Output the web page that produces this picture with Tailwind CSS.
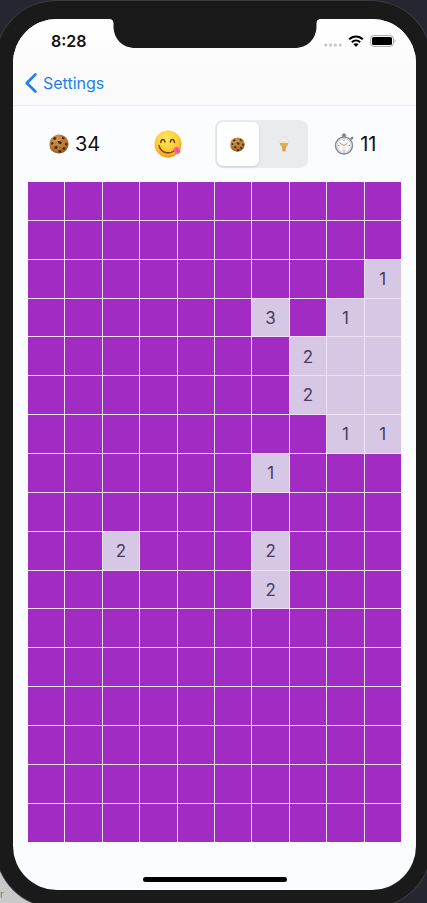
<!DOCTYPE html>
<html lang="en">
<head>
<meta charset="utf-8">
<meta name="viewport" content="width=device-width, initial-scale=1">
<title>Cookie Sweeper</title>
<script src="https://cdn.jsdelivr.net/npm/@tailwindcss/browser@4"></script>
</head>
<body class="bg-[#25262f] font-[Inter,'Liberation_Sans',sans-serif]">
<svg class="absolute h-0 w-0" aria-hidden="true">
  <defs>
    <radialGradient id="dough" cx=".4" cy=".3" r=".75">
      <stop offset="0" stop-color="#d39a55"/><stop offset=".65" stop-color="#b87834"/><stop offset="1" stop-color="#85501f"/>
    </radialGradient>
    <radialGradient id="skin" cx=".45" cy=".3" r=".75">
      <stop offset="0" stop-color="#ffe95c"/><stop offset=".6" stop-color="#fdc935"/><stop offset="1" stop-color="#ee8f1c"/>
    </radialGradient>
    <symbol id="cookie" viewBox="0 0 40 40">
      <path d="M20 1c5 0 10 2 13 5s6 8 6 14-3 11-6 14-8 5-13 5-10-2-14-5-5-9-5-14 2-11 6-14 8-5 13-5z" fill="url(#dough)"/>
      <g fill="#4a2a14">
        <path d="M11 6l4 1-1 4-4 1-2-3zM26 5l5 2 0 4-5-1zM17 14l5 0 4 3-2 4-5-2zM4 17l4-1 1 4-4 2zM33 17l4 2 0 4-5-1zM11 25l4-2 3 4-3 3-4-1zM28 26l5 1 -2 5-4-1zM18 33l5-1 2 4-5 2z"/>
      </g>
      <g fill="#7a4a22"><circle cx="14" cy="18" r="1.2"/><circle cx="27" cy="14" r="1"/><circle cx="22" cy="27" r="1.2"/><circle cx="8" cy="29" r="1"/></g>
    </symbol>
  </defs>
</svg>
<div class="relative overflow-hidden">
  <div class="absolute bottom-0 left-0 h-16 w-16 bg-[#c9c9c9] text-[10px] leading-none text-[#808080]"><span class="absolute bottom-1 left-0" aria-hidden="true">r</span></div>
  <div class="relative -mx-1 mt-px -mb-1 rounded-[60px] bg-[#1a1a1a] pt-[18px] pr-[15px] pb-[17px] pl-[17px] ring-1 ring-[#3c3c40]">
    <main class="relative overflow-hidden rounded-[44px] bg-[#fbfcff]">
      <svg class="absolute top-0 left-1/2 h-[29px] w-[213px] -translate-x-1/2" viewBox="0 0 213 29" fill="#1a1a1a" aria-hidden="true">
        <path d="M0 0H213C209 0 208 1.500 208 5V7C208 20 199 29 186 29H27C14 29 5 20 5 7V5C5 1.500 4 0 0 0Z"/>
      </svg>
      <header class="border-b border-[#e9e9ec] bg-linear-to-b from-white to-[#f9f9fa]">
        <div class="flex h-11 items-center justify-between pr-5 pl-[38px] text-base font-semibold text-[#111]">
          <time>8:28</time>
          <div class="flex items-center gap-[6px]">
            <svg class="mt-2 h-1 w-[18px]" viewBox="0 0 18 4" fill="#c4c4c4" aria-label="No signal"><circle cx="1.800" cy="2" r="1.600"/><circle cx="6.600" cy="2" r="1.600"/><circle cx="11.400" cy="2" r="1.600"/><circle cx="16.200" cy="2" r="1.600"/></svg>
            <svg class="h-3 w-4" viewBox="0 0 16 12" fill="none" stroke="#000" stroke-width="2" aria-label="Wi-Fi"><path d="M1.200 4.400C5 .6 11 .6 14.800 4.400M3.800 7.200C6.300 4.900 9.700 4.900 12.200 7.200"/><path d="M5.400 9.200C7 7.900 9 7.900 10.600 9.200L8 11.900Z" fill="#000" stroke="none"/></svg>
            <svg class="h-3 w-[26px]" viewBox="0 0 26 12" aria-label="Battery full"><rect x=".6" y=".6" width="22.800" height="10.800" rx="3" fill="none" stroke="#a8a8a8"/><rect x="2" y="2" width="20" height="8" rx="1.500"/><path d="M24.500 4v4c1.300-.6 1.300-3.400 0-4z" fill="#a8a8a8"/></svg>
          </div>
        </div>
        <nav class="flex h-[42px] items-center pb-[3px] pl-3">
          <a href="#" class="flex items-center gap-[6px] text-base text-[#1a80f8]">
            <svg class="h-5 w-3" viewBox="0 0 12 20" fill="none" stroke="currentColor" stroke-width="2.600" stroke-linecap="round" stroke-linejoin="round" aria-hidden="true"><path d="M10.400 1.500L1.800 10l8.600 8.500"/></svg>
            Settings
          </a>
        </nav>
      </header>
      <section class="grid grid-cols-4 items-center px-[15px] py-[14px] text-xl text-[#111]">
        <div class="flex items-center justify-center gap-[6px]">
          <svg class="h-5 w-5" role="img" aria-label="Cookies left"><use href="#cookie"/></svg>
          <output>34</output>
        </div>
        <button type="button" class="mx-auto" aria-label="New game">
          <svg class="h-7 w-7" viewBox="0 0 56 56" aria-hidden="true">
            <circle cx="28" cy="28" r="27" fill="url(#skin)"/>
            <path d="M13.500 25c1-8 7-8 8.500-1M32.500 24c1.500-7 7.500-7 8.500 1" fill="none" stroke="#6b3c10" stroke-width="2.800" stroke-linecap="round"/>
            <path d="M10 31c4 17 26 20 36 4" fill="none" stroke="#7d4310" stroke-width="2.800" stroke-linecap="round"/>
            <path d="M40 38c1-4 6-6 9-3 5 4 5 10 1 12-4 3-11-2-10-9z" fill="#f6609c"/>
            <path d="M44 37l4 6" stroke="#cf3c78" stroke-width="1.500" stroke-linecap="round"/>
          </svg>
        </button>
        <fieldset class="grid grid-cols-2 gap-1 rounded-lg bg-[#eaebed] p-[2px]" aria-label="Tap mode">
          <label class="flex h-11 items-center justify-center rounded-md has-checked:bg-white has-checked:shadow">
            <input type="radio" name="mode" class="sr-only" aria-label="Cookie" checked>
            <svg class="h-[15px] w-[15px]" aria-hidden="true"><use href="#cookie"/></svg>
          </label>
          <label class="flex h-11 items-center justify-center rounded-md has-checked:bg-white has-checked:shadow">
            <input type="radio" name="mode" class="sr-only" aria-label="Ice cream">
            <svg class="h-4 w-3" viewBox="0 0 24 32" aria-hidden="true">
              <path d="M4 14c-2-3 0-6 3-6 0-3 3-3 5-4 1-1 0-2 2-3 3 2 2 5 3 6 3 1 5 4 3 7z" fill="#f7f2e4" stroke="#d8cfb8"/>
              <path d="M7 11c4 1 7 0 10-2" stroke="#d0c6ac" fill="none"/>
              <path d="M4 14h16l-1 6h-2l-2 11h-6L7 20H5z" fill="#e8b25c"/>
              <path d="M4 16h16M8 21h9M10 21l1 9M14 21l-1 9" stroke="#c58a35" fill="none"/>
            </svg>
          </label>
        </fieldset>
        <div class="flex items-center justify-center gap-[6px] pl-[2px]">
          <svg class="h-[22px] w-5" viewBox="0 0 40 44" role="img" aria-label="Elapsed time">
            <path d="M17 2h6v6h-6zM32 10l5-3 2 4-5 3z" fill="#777b83"/>
            <circle cx="20" cy="5" r="3.500" fill="none" stroke="#8b8f96" stroke-width="2"/>
            <circle cx="20" cy="25" r="17" fill="#f7f6f4" stroke="#888c94" stroke-width="3"/>
            <circle cx="20" cy="25" r="14" fill="none" stroke="#c6c7ca" stroke-width="1.500"/>
            <path d="M20 13v3M20 34v3M8 25h3M29 25h3" stroke="#666" stroke-width="1.500"/>
            <path d="M11 20l9 5 7-5" fill="none" stroke="#b56a58" stroke-width="1.500"/>
          </svg>
          <output>11</output>
        </div>
      </section>
      <section class="px-[15px]">
        <div id="board" class="grid grid-cols-10 gap-px bg-[#f0e2f8] text-[17px] text-[#4b3b60]" aria-label="Board"></div>
      </section>
      <footer class="flex h-12 items-end justify-center pb-2"><div class="h-[5px] w-36 rounded-full bg-black"></div></footer>
    </main>
  </div>
</div>
<script>
  // "#" is a covered cell, "." an open empty cell, a digit an open cell with its count.
  const rows = [
    "##########",
    "##########",
    "#########1",
    "######3#1.",
    "#######2..",
    "#######2..",
    "########11",
    "######1###",
    "##########",
    "##2###2###",
    "######2###",
    "##########",
    "##########",
    "##########",
    "##########",
    "##########",
    "##########"
  ];
  const board = document.getElementById("board");
  rows.forEach((row, y) => [...row].forEach((cell, x) => {
    const b = document.createElement("button");
    b.type = "button";
    b.className = cell === "#"
      ? "flex aspect-[25/26] items-center justify-center bg-[#a22bc3]"
      : "flex aspect-[25/26] items-center justify-center bg-[#d6c7e5] pt-[2px]";
    b.textContent = /\d/.test(cell) ? cell : "";
    b.setAttribute("aria-label", `Row ${y + 1}, column ${x + 1}` + (cell === "#" ? ", covered" : cell === "." ? ", empty" : `, ${cell}`));
    board.append(b);
  }));
</script>
</body>
</html>
